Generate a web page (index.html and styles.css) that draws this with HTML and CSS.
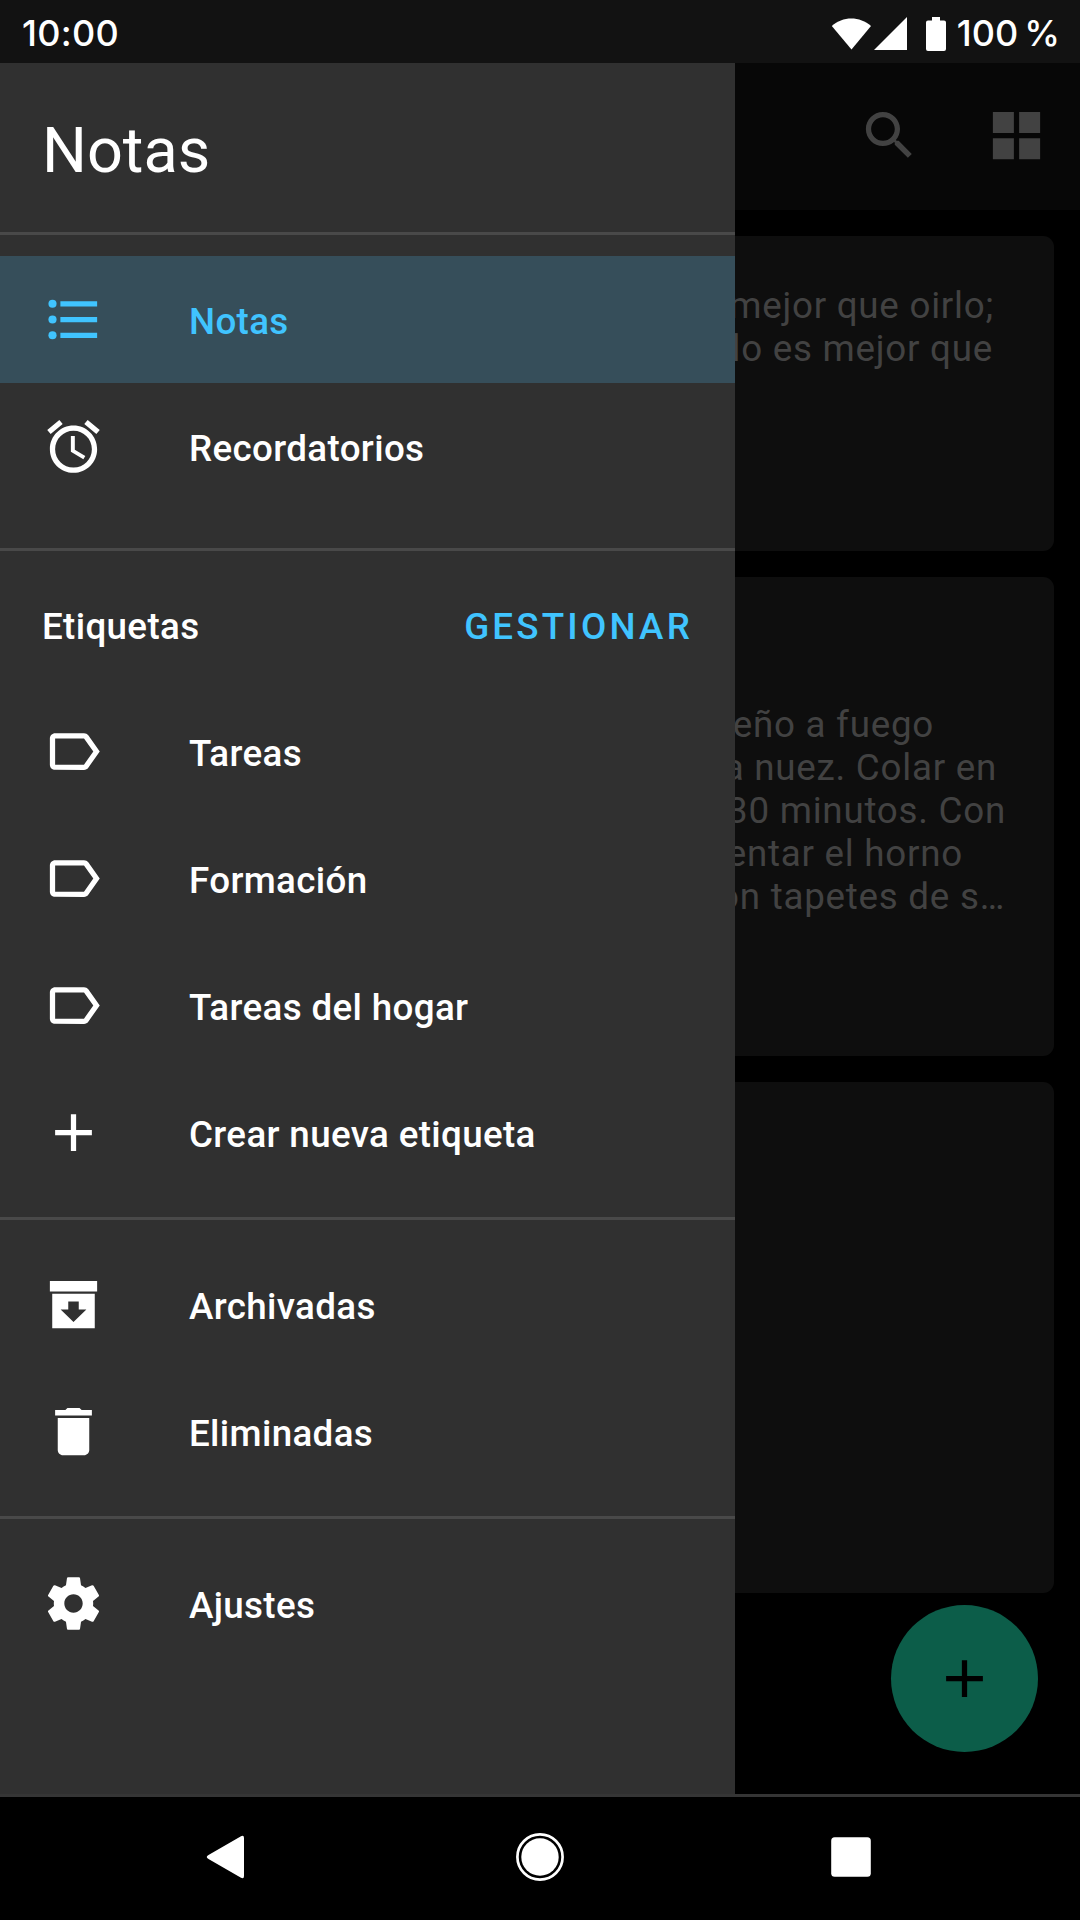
FILE: index.html
```html
<!DOCTYPE html>
<html lang="es">
<head>
<meta charset="utf-8">
<title>Notas</title>
<link rel="stylesheet" href="styles.css">
</head>
<body>
<svg class="defs" width="0" height="0">
  <symbol id="label" viewBox="0 0 24 24"><path d="M17.63 5.84C17.27 5.33 16.67 5 16 5L5 5.01C3.9 5.01 3 5.9 3 7v10c0 1.1.9 1.99 2 1.99L16 19c.67 0 1.27-.33 1.63-.84L22 12l-4.37-6.16zM16 17H5V7h11l3.55 5L16 17z"/></symbol>
  <symbol id="plus" viewBox="0 0 24 24"><path d="M19 13h-6v6h-2v-6H5v-2h6V5h2v6h6v2z"/></symbol>
</svg>
<div class="screen">
  <header class="status">
    <span class="clock">10:00</span>
    <div class="indicators">
      <svg class="signals" viewBox="0 0 120 40">
        <path d="M.8 13C11.500 3 29 3 40 13L20.500 36.500z"/>
        <path d="M43 37H76V4z"/>
        <path d="M101 4h8v3.500h4q2 0 2 2V36q0 2-2 2H97q-2 0-2-2V9.500q0-2 2-2h4z"/>
      </svg>
      <span class="percent">100 %</span>
    </div>
  </header>
  <main class="stage">
    <div class="notes">
      <div class="toolbar">
        <svg class="icon" viewBox="0 0 24 24"><path d="M15.500 14h-.79l-.28-.27C15.410 12.590 16 11.110 16 9.500 16 5.910 13.090 3 9.500 3S3 5.910 3 9.500 5.910 16 9.500 16c1.610 0 3.090-.59 4.230-1.570l.27.28v.79l5 4.990L20.490 19l-4.990-5zm-6 0C7.010 14 5 11.990 5 9.500S7.010 5 9.500 5 14 7.010 14 9.500 11.990 14 9.500 14z"/></svg>
        <svg class="icon" viewBox="0 0 24 24"><path d="M3 3h8v8H3zM13 3h8v8h-8zM3 13h8v8H3zM13 13h8v8h-8z"/></svg>
      </div>
      <div class="cards">
        <article class="card short">
          <p class="to-992">mejor que oirlo;</p>
          <p class="to-991">lo es mejor que</p>
        </article>
        <article class="card medium">
          <p class="to-932">eño a fuego</p>
          <p class="to-995">a nuez. Colar en</p>
          <p class="to-1004">30 minutos. Con</p>
          <p class="to-961">entar el horno</p>
          <p class="to-1002">on tapetes de s…</p>
        </article>
        <article class="card tall"></article>
      </div>
      <button class="fab"><svg class="icon" viewBox="0 0 24 24"><use href="#plus"/></svg></button>
    </div>
    <nav class="drawer">
      <h1>Notas</h1>
      <section class="group">
        <a class="row selected"><svg class="icon" viewBox="0 0 24 24"><circle cx="4" cy="6" r="1.550"/><circle cx="4" cy="12" r="1.550"/><circle cx="4" cy="18" r="1.550"/><path d="M7 5h14v2H7zM7 11h14v2H7zM7 17h14v2H7z"/></svg><span>Notas</span></a>
        <a class="row"><svg class="icon" viewBox="0 0 24 24"><path d="M22 5.720l-4.600-3.860-1.290 1.530 4.600 3.860L22 5.720zM7.880 3.390L6.600 1.860 2 5.710l1.290 1.530 4.590-3.850zM12.500 8H11v6l4.750 2.850.75-1.230-4-2.370V8zM12 4c-4.970 0-9 4.030-9 9s4.020 9 9 9c4.970 0 9-4.030 9-9s-4.030-9-9-9zm0 16c-3.870 0-7-3.130-7-7s3.130-7 7-7 7 3.130 7 7-3.130 7-7 7z"/></svg><span>Recordatorios</span></a>
      </section>
      <section class="group labels">
        <div class="caption"><h2>Etiquetas</h2><a class="manage">GESTIONAR</a></div>
        <a class="row"><svg class="icon" viewBox="0 0 24 24"><use href="#label"/></svg><span>Tareas</span></a>
        <a class="row"><svg class="icon" viewBox="0 0 24 24"><use href="#label"/></svg><span>Formación</span></a>
        <a class="row"><svg class="icon" viewBox="0 0 24 24"><use href="#label"/></svg><span>Tareas del hogar</span></a>
        <a class="row"><svg class="icon" viewBox="0 0 24 24"><use href="#plus"/></svg><span>Crear nueva etiqueta</span></a>
      </section>
      <section class="group">
        <a class="row"><svg class="icon" viewBox="0 0 24 24"><path fill-rule="evenodd" d="M3 3h18v4H3zM3.900 7.900h16.200V21H3.900zM10 10.900v3H7.100l4.900 4.800 4.900-4.800H14v-3z"/></svg><span>Archivadas</span></a>
        <a class="row"><svg class="icon" viewBox="0 0 24 24"><path d="M6 19c0 1.100.9 2 2 2h8c1.100 0 2-.9 2-2V6.900H6zM5 3.800h3.900L9.700 3h4.600l.8.800H19v2.100H5z"/></svg><span>Eliminadas</span></a>
      </section>
      <section class="group">
        <a class="row"><svg class="icon" viewBox="0 0 24 24"><path d="M19.430 12.980c.04-.32.07-.64.07-.98s-.03-.66-.07-.98l2.110-1.650c.19-.15.24-.42.12-.64l-2-3.460c-.12-.22-.39-.3-.61-.22l-2.490 1c-.52-.4-1.080-.73-1.690-.98l-.38-2.650C14.460 2.180 14.250 2 14 2h-4c-.25 0-.46.18-.49.42l-.38 2.650c-.61.25-1.170.59-1.690.98l-2.490-1c-.23-.09-.49 0-.61.22l-2 3.460c-.13.22-.07.49.12.64l2.110 1.650c-.04.32-.07.65-.07.98s.03.66.07.98l-2.110 1.650c-.19.15-.24.42-.12.64l2 3.460c.12.22.39.3.61.22l2.490-1c.52.4 1.080.73 1.690.98l.38 2.650c.03.24.24.42.49.42h4c.25 0 .46-.18.49-.42l.38-2.650c.61-.25 1.170-.59 1.690-.98l2.490 1c.23.09.49 0 .61-.22l2-3.460c.12-.22.07-.49-.12-.64l-2.110-1.650zM12 15.500c-1.930 0-3.500-1.570-3.500-3.500s1.570-3.500 3.500-3.500 3.500 1.570 3.500 3.500-1.570 3.500-3.500 3.500z"/></svg><span>Ajustes</span></a>
      </section>
    </nav>
  </main>
  <footer class="navbar">
    <svg class="key back" viewBox="0 0 60 60"><path d="M9.500 28L42 9.300Q45 7.800 45 11V49Q45 52.200 42 50.700L9.500 32Q6 30 9.500 28z"/></svg>
    <svg class="key" viewBox="0 0 60 60"><circle cx="30" cy="30" r="22.600" fill="none" stroke="#fff" stroke-width="2.700"/><circle cx="30" cy="30" r="18.700"/></svg>
    <svg class="key" viewBox="0 0 60 60"><rect x="10.200" y="10.200" width="39.600" height="39.600" rx="3.500"/></svg>
  </footer>
</div>
</body>
</html>
```
FILE: styles.css
```css
* { box-sizing: border-box; }
body { margin: 0; background: #000; font-family: Roboto, sans-serif; }
h1, h2, p { margin: 0; }
.defs { display: block; }
.screen { width: 1080px; height: 1920px; display: flex; flex-direction: column; overflow: hidden; background: #000; }
.icon { width: 63px; height: 63px; flex: none; fill: currentColor; display: block; }

.status {
  height: 63px; display: flex; align-items: center; justify-content: space-between;
  padding: 3px 20px 0 22px; background: #121212; color: #fff;
  font: 500 36px/1 Inter, sans-serif;
}
.indicators { display: flex; align-items: center; }
.signals { width: 120px; height: 40px; fill: #fff; margin: -1px 6px 0 0; }
.clock, .percent { white-space: nowrap; }
.clock { letter-spacing: .3px; }
.percent { word-spacing: -3.5px; }

.stage { height: 1731px; flex: none; display: grid; grid-template-columns: 1080px; grid-template-rows: 1731px; }
.notes, .drawer { grid-area: 1 / 1; }
.notes { position: relative; }
.toolbar {
  height: 147px; display: flex; justify-content: flex-end; align-items: flex-start; gap: 64px;
  padding: 41px 32px 0 0; background: #070707; color: #424242;
}
.cards { display: flex; flex-direction: column; gap: 26px; padding: 26px; }
.card {
  border-radius: 11px; background: #0e0e0e; color: #424242; text-align: right;
  font-size: 36.75px; line-height: 43px; letter-spacing: .75px;
}
.short { height: 315px; padding-top: 48px; }
.medium { height: 479px; padding-top: 126px; }
.tall { height: 511px; }
.to-992 { padding-right: 60px; }
.to-991 { padding-right: 61px; }
.to-932 { padding-right: 120px; }
.to-995 { padding-right: 57px; }
.to-1004 { padding-right: 48px; }
.to-961 { padding-right: 91px; }
.to-1002 { padding-right: 49px; }
.fab {
  position: absolute; right: 42px; bottom: 42px; width: 147px; height: 147px; padding: 0;
  border: 0; border-radius: 50%; background: #0c5d49; color: #000;
  display: flex; align-items: center; justify-content: center;
}

.drawer { z-index: 1; width: 735px; height: 1731px; background: #303030; color: #fff; }
.drawer h1 { height: 169px; padding: 51px 42px 0; font-size: 63px; line-height: 74px; font-weight: 400; }
.group { border-top: 3px solid #494949; padding: 21px 0; }
.group:nth-of-type(1) { padding-bottom: 38px; }
.row { height: 127px; display: flex; align-items: center; padding-left: 42px; gap: 84px; font-size: 36.75px; font-weight: 500; letter-spacing: .35px; }
.row span { padding-top: 3px; }
.selected { background: #364e5a; color: #40c4ff; }
.labels { padding-top: 11px; }
.caption { height: 126px; display: flex; align-items: center; justify-content: space-between; padding: 3px 42px 0; }
.caption h2 { font-size: 36.75px; font-weight: 500; letter-spacing: .35px; }
.manage { color: #40c4ff; font-size: 36.75px; font-weight: 500; letter-spacing: 3.2px; }

.navbar {
  height: 126px; flex: none; border-top: 3px solid #353535; background: #000; fill: #fff;
  display: flex; align-items: center; justify-content: space-between; padding: 0 199px 3px 199px;
}
.key { width: 60px; height: 60px; }
```
